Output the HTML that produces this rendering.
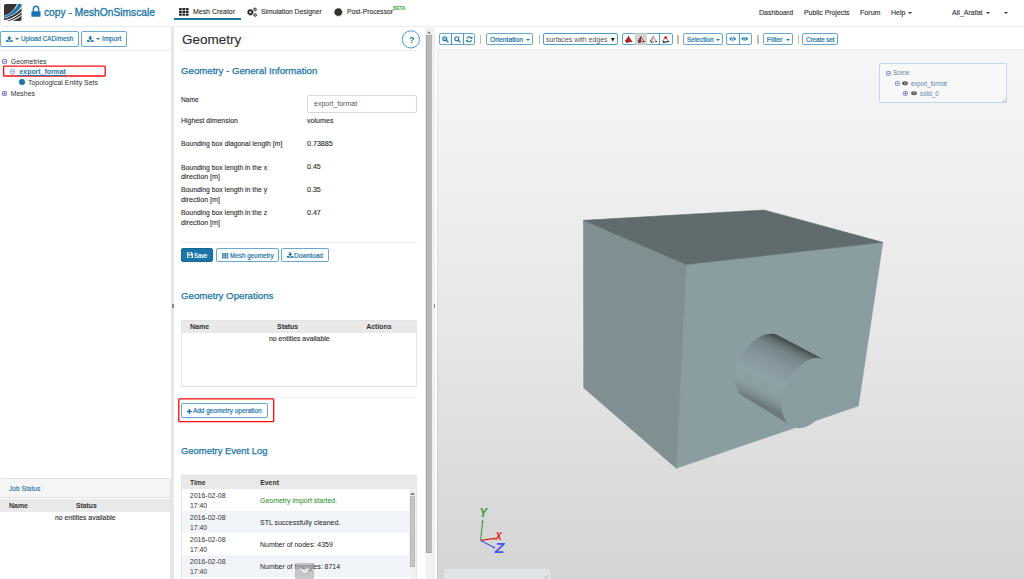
<!DOCTYPE html>
<html lang="en">
<head>
<meta charset="utf-8">
<title>copy - MeshOnSimscale</title>
<style>
*{box-sizing:border-box;margin:0;padding:0}
html,body{width:1024px;height:579px;overflow:hidden;background:#fff}
body{font-family:"Liberation Sans",sans-serif;color:#333;position:relative;font-size:7.5px}
.abs{position:absolute}
svg{overflow:visible}
.t{position:absolute;white-space:nowrap;transform-origin:0 50%;color:#2e2e2e;-webkit-text-stroke:.12px currentColor}
.t.a{-webkit-text-stroke:0;color:#333}
.blue{color:#1b75a8}
.btn{position:absolute;border:1px solid #66a8cf;border-radius:2px;background:#fff}
.sep{position:absolute;width:1.2px;height:9px;background:#d0b9a4;top:34.9px}
.hr{position:absolute;height:1px;background:#ebebeb}
.caret{position:absolute;width:0;height:0;border-left:2.2px solid transparent;border-right:2.2px solid transparent;border-top:2.5px solid #333}
.caret.b{border-top-color:#1b75a8}
</style>
</head>
<body>
<!-- ================= HEADER ================= -->
<div class="abs" style="left:0;top:-3px;width:1030px;height:29.8px;background:#fff;border:1px solid #ececec;border-radius:3px"></div>
<svg class="abs" style="left:4px;top:4px" width="18" height="17" viewBox="0 0 18 17">
  <rect x="0" y="0" width="17.5" height="17" rx="1.8" fill="#3a3436"/>
  <path d="M17.5 0 L13 0 C11 5 6 10 0 12 L0 14.6 C8 12.5 14.5 8 17.5 4 Z" fill="#fff"/>
  <path d="M17.5 0 L14 0 C12 5 6.5 10.3 0 12.6 L0 14 C8 12 14.8 7 17.5 2 Z" fill="#1a75b0"/>
  <path d="M0 16.2 C8 14.5 14 11 17.5 7.2 L17.5 8.2 C14 12 8 15.5 2 17 L0 17 Z" fill="#fff"/>
  <path d="M5 17 C10 15.8 15 13 17.5 10.6 L17.5 11.6 C15 14 11.5 16 8.5 17 Z" fill="#fff"/>
</svg>
<svg class="abs" style="left:30.5px;top:5px" width="10" height="12" viewBox="0 0 10 12">
  <path d="M2.4 6.4 V4.2 A2.6 2.9 0 0 1 7.6 4.2 V6.4" fill="none" stroke="#1a75b0" stroke-width="1.5"/>
  <rect x="0.4" y="6.2" width="9.2" height="5.6" rx="0.6" fill="#1a75b0"/>
</svg>
<div class="t" style="left:44px;top:4.70px;height:15px;line-height:15px;font-size:10.5px;transform:scaleX(0.9754);color:#1b75a8;-webkit-text-stroke:.32px #1b75a8">copy - MeshOnSimscale</div>

<!-- nav: mesh creator -->
<svg class="abs" style="left:179.4px;top:8px" width="10" height="8" viewBox="0 0 10 8">
  <g fill="#2b2526">
  <rect x="0" y="0" width="2.8" height="2.2" rx=".4"/><rect x="3.4" y="0" width="2.8" height="2.2" rx=".4"/><rect x="6.8" y="0" width="2.8" height="2.2" rx=".4"/>
  <rect x="0" y="2.8" width="2.8" height="2.2" rx=".4"/><rect x="3.4" y="2.8" width="2.8" height="2.2" rx=".4"/><rect x="6.8" y="2.8" width="2.8" height="2.2" rx=".4"/>
  <rect x="0" y="5.6" width="2.8" height="2.2" rx=".4"/><rect x="3.4" y="5.6" width="2.8" height="2.2" rx=".4"/><rect x="6.8" y="5.6" width="2.8" height="2.2" rx=".4"/>
  </g>
</svg>
<div class="t" style="left:193px;top:5.90px;height:11px;line-height:11px;font-size:8px;transform:scaleX(0.8665);">Mesh Creator</div>
<div class="abs" style="left:174px;top:18px;width:67px;height:2px;background:#1b75a8"></div>
<!-- nav: simulation designer (gears) -->
<svg class="abs" style="left:244px;top:4px" width="20" height="16" viewBox="244 4 20 16">
  <circle cx="250.35" cy="12.3" r="1.9" fill="none" stroke="#2b2526" stroke-width="1.6"/>
  <circle cx="250.35" cy="12.3" r="2.9" fill="none" stroke="#2b2526" stroke-width=".9" stroke-dasharray="1.14 1.14"/>
  <circle cx="255.05" cy="9.4" r="1.15" fill="none" stroke="#2b2526" stroke-width=".95"/>
  <circle cx="255.05" cy="9.4" r="1.75" fill="none" stroke="#2b2526" stroke-width=".5" stroke-dasharray=".7 .67"/>
  <circle cx="255.2" cy="15.05" r="1.15" fill="none" stroke="#2b2526" stroke-width=".95"/>
  <circle cx="255.2" cy="15.05" r="1.75" fill="none" stroke="#2b2526" stroke-width=".5" stroke-dasharray=".7 .67"/>
</svg>
<div class="t" style="left:261.2px;top:5.90px;height:11px;line-height:11px;font-size:8px;transform:scaleX(0.8492);">Simulation Designer</div>
<!-- nav: post-processor -->
<svg class="abs" style="left:328px;top:2px" width="24" height="20" viewBox="328 2 24 20">
  <circle cx="338.3" cy="12.2" r="3.6" fill="#332e2f"/>
  <circle cx="338.3" cy="12.2" r="3.7" fill="none" stroke="#332e2f" stroke-width="1" stroke-dasharray="1 .94"/>
</svg>
<div class="t" style="left:346.7px;top:5.90px;height:11px;line-height:11px;font-size:8px;transform:scaleX(0.8411);">Post-Processor</div>
<div class="t" style="left:393px;top:3.80px;height:8px;line-height:8px;font-size:5.3px;transform:scaleX(0.8909);font-weight:bold;color:#4aad4a">BETA</div>

<div class="t" style="left:759.4px;top:6.50px;height:11px;line-height:11px;font-size:7.5px;transform:scaleX(0.9291);">Dashboard</div>
<div class="t" style="left:804.3px;top:6.50px;height:11px;line-height:11px;font-size:7.5px;transform:scaleX(0.9172);">Public Projects</div>
<div class="t" style="left:860.4px;top:6.50px;height:11px;line-height:11px;font-size:7.5px;transform:scaleX(0.9459);">Forum</div>
<div class="t" style="left:891.4px;top:6.50px;height:11px;line-height:11px;font-size:7.5px;transform:scaleX(0.9328);">Help</div>
<div class="caret" style="left:908px;top:12px"></div>
<div class="t" style="left:952.4px;top:6.50px;height:11px;line-height:11px;font-size:7.5px;transform:scaleX(0.9406);">Ali_Arafat</div>
<div class="caret" style="left:985.6px;top:12px"></div>
<div class="caret" style="left:1003.6px;top:12px"></div>

<!-- ================= LEFT PANEL ================= -->
<div class="abs" style="left:171.3px;top:27px;width:2.8px;height:552px;background:#e7e7e7"></div>
<div class="btn" style="left:0;top:31px;width:79px;height:15.5px"></div>
<svg class="abs" style="left:5.8px;top:36px" width="7" height="6" viewBox="0 0 7 6">
  <path d="M3.3 0 L5.6 2.4 H4.2 V4 H2.4 V2.4 H1 Z" fill="#1b75a8"/>
  <path d="M0 3.9 H1.8 V4.6 H4.8 V3.9 H6.6 V5.8 H0 Z" fill="#1b75a8"/>
</svg>
<div class="caret b" style="left:15.2px;top:38.3px"></div>
<div class="t" style="left:21px;top:34.10px;height:10px;line-height:10px;font-size:7px;transform:scaleX(0.9005);color:#1b75a8;-webkit-text-stroke:.2px #1b75a8">Upload CAD/mesh</div>
<div class="btn" style="left:81.2px;top:31px;width:46px;height:15.5px"></div>
<svg class="abs" style="left:87px;top:36px" width="7" height="6" viewBox="0 0 7 6">
  <path d="M2.4 0 H4.2 V1.8 H5.6 L3.3 4.2 L1 1.8 H2.4 Z" fill="#1b75a8"/>
  <path d="M0 3.9 H1.6 L3.3 5 L5 3.9 H6.6 V5.8 H0 Z" fill="#1b75a8"/>
</svg>
<div class="caret b" style="left:96px;top:38.3px"></div>
<div class="t" style="left:101.8px;top:34.10px;height:10px;line-height:10px;font-size:7px;transform:scaleX(0.9776);color:#1b75a8;-webkit-text-stroke:.2px #1b75a8">Import</div>
<div class="hr" style="left:0;top:50px;width:172px;background:#ededed"></div>

<!-- tree -->
<svg class="abs" style="left:2px;top:59px" width="5" height="5" viewBox="0 0 5 5"><rect x=".5" y=".5" width="4" height="4" rx=".6" fill="#fff" stroke="#5a5ac8" stroke-width=".75"/><path d="M1.2 2.5H3.8" stroke="#5a5ac8" stroke-width=".75"/></svg>
<div class="t a" style="left:10.8px;top:56.50px;height:10px;line-height:10px;font-size:6.9px;">Geometries</div>
<svg class="abs" style="left:0;top:60px" width="110" height="20" viewBox="0 60 110 20"><rect x="3.6" y="66.1" width="101.6" height="9.9" rx=".8" fill="none" stroke="#fb0d0d" stroke-width="1.35"/></svg>
<svg class="abs" style="left:10.3px;top:68.6px" width="5" height="5.4" viewBox="0 0 5 5.4"><rect x=".5" y=".5" width="4" height="4.4" rx="1.2" fill="#fff" stroke="#8c8cd4" stroke-width=".9"/><path d="M1.2 2.7H3.8" stroke="#8c8cd4" stroke-width=".9"/></svg>
<div class="t a" style="left:17.6px;top:66.50px;height:10px;line-height:10px;font-size:6.9px;font-weight:bold;color:#1b75a8;text-decoration:underline">&nbsp;export_format</div>
<div class="abs" style="left:19.3px;top:79.2px;width:5.8px;height:5.8px;border-radius:50%;background:#1b75a8"></div>
<div class="t a" style="left:27.9px;top:77.60px;height:10px;line-height:10px;font-size:6.9px;transform:scaleX(1.0097);">Topological Entity Sets</div>
<svg class="abs" style="left:2px;top:91.2px" width="5" height="5" viewBox="0 0 5 5"><rect x=".5" y=".5" width="4" height="4" rx=".6" fill="#fff" stroke="#5a5ac8" stroke-width=".75"/><path d="M1.2 2.5H3.8M2.5 1.2V3.8" stroke="#5a5ac8" stroke-width=".75"/></svg>
<div class="t a" style="left:10.8px;top:88.80px;height:10px;line-height:10px;font-size:6.9px;">Meshes</div>

<!-- job status -->
<div class="abs" style="left:0;top:478px;width:171px;height:101px;border:1px solid #e2e2e2;border-left:0;border-bottom:0;border-radius:2px 2px 0 0;background:#fff"></div>
<div class="abs" style="left:0;top:479px;width:170px;height:19px;background:#f5f5f5;border-bottom:1px solid #e2e2e2"></div>
<div class="t" style="left:8.6px;top:482.50px;height:11px;line-height:11px;font-size:7.5px;transform:scaleX(0.8857);color:#1b75a8">Job Status</div>
<div class="abs" style="left:0;top:499px;width:170px;height:12.5px;background:#e9e9e9"></div>
<div class="t a" style="left:8.8px;top:501.10px;height:10px;line-height:10px;font-size:6.9px;transform:scaleX(1.0116);font-weight:bold">Name</div>
<div class="t a" style="left:75.8px;top:501.10px;height:10px;line-height:10px;font-size:6.9px;transform:scaleX(0.9875);font-weight:bold">Status</div>
<div class="t" style="left:55px;top:511.50px;height:11px;line-height:11px;font-size:7.5px;transform:scaleX(0.9197);">no entities available</div>

<!-- ================= CENTER PANEL ================= -->
<div class="t" style="left:181.6px;top:29.60px;height:19px;line-height:19px;font-size:13.7px;transform:scaleX(0.9868);color:#2b2b2b">Geometry</div>
<svg class="abs" style="left:400px;top:28px" width="22" height="22" viewBox="400 28 22 22"><circle cx="410.95" cy="39.4" r="8.6" fill="#fff" stroke="#4a9bc8" stroke-width="1"/></svg>
<div class="t" style="left:409.2px;top:33.50px;height:12px;line-height:12px;font-size:8.4px;font-weight:bold;color:#1b75a8;-webkit-text-stroke:0">?</div>
<div class="hr" style="left:181px;top:50px;width:236px"></div>
<div class="t" style="left:181px;top:63.70px;height:13px;line-height:13px;font-size:9.5px;transform:scaleX(1.0163);color:#1b75a8;-webkit-text-stroke:.25px #1b75a8">Geometry - General Information</div>

<div class="t" style="left:181.1px;top:94.10px;height:11px;line-height:11px;font-size:7.5px;transform:scaleX(0.8893);">Name</div>
<div class="abs" style="left:307px;top:95px;width:110px;height:18px;border:1px solid #d9d9d9;border-radius:2px;background:#fff"></div>
<div class="t a" style="left:314.2px;top:98.20px;height:11px;line-height:11px;font-size:7.5px;transform:scaleX(0.9313);color:#555">export_format</div>
<div class="t" style="left:181.1px;top:115.10px;height:11px;line-height:11px;font-size:7.5px;transform:scaleX(0.9222);">Highest dimension</div>
<div class="t" style="left:307px;top:114.60px;height:11px;line-height:11px;font-size:7.5px;transform:scaleX(0.9485);">volumes</div>
<div class="t" style="left:181.1px;top:138.00px;height:11px;line-height:11px;font-size:7.5px;transform:scaleX(0.9098);">Bounding box diagonal length [m]</div>
<div class="t" style="left:307px;top:137.50px;height:11px;line-height:11px;font-size:7.5px;transform:scaleX(0.9475);">0.73885</div>
<div class="t" style="left:181.1px;top:161.50px;height:11px;line-height:11px;font-size:7.5px;transform:scaleX(0.9096);">Bounding box length in the x</div>
<div class="t" style="left:181.1px;top:170.70px;height:11px;line-height:11px;font-size:7.5px;transform:scaleX(0.9569);">direction [m]</div>
<div class="t" style="left:307px;top:160.70px;height:11px;line-height:11px;font-size:7.5px;transform:scaleX(0.9446);">0.45</div>
<div class="t" style="left:181.1px;top:184.30px;height:11px;line-height:11px;font-size:7.5px;transform:scaleX(0.9096);">Bounding box length in the y</div>
<div class="t" style="left:181.1px;top:193.60px;height:11px;line-height:11px;font-size:7.5px;transform:scaleX(0.9569);">direction [m]</div>
<div class="t" style="left:307px;top:183.60px;height:11px;line-height:11px;font-size:7.5px;transform:scaleX(0.9446);">0.35</div>
<div class="t" style="left:181.1px;top:207.20px;height:11px;line-height:11px;font-size:7.5px;transform:scaleX(0.9096);">Bounding box length in the z</div>
<div class="t" style="left:181.1px;top:216.80px;height:11px;line-height:11px;font-size:7.5px;transform:scaleX(0.9569);">direction [m]</div>
<div class="t" style="left:307px;top:206.70px;height:11px;line-height:11px;font-size:7.5px;transform:scaleX(0.9446);">0.47</div>
<div class="hr" style="left:181px;top:241.5px;width:236px"></div>

<div class="btn" style="left:181px;top:248px;width:32.4px;height:14.2px;background:#1b75a8;border-color:#166592"></div>
<svg class="abs" style="left:186.9px;top:252.4px" width="6" height="6" viewBox="0 0 5.4 5.6"><path d="M0 0H4L5.4 1.4V5.6H0Z" fill="#fff"/><rect x="1" y=".5" width="2.6" height="1.6" fill="#1b75a8"/><rect x="1" y="3.2" width="3.4" height="2" fill="#1b75a8"/></svg>
<div class="t" style="left:194px;top:250.10px;height:11px;line-height:11px;font-size:7.5px;transform:scaleX(0.7774);color:#fff;-webkit-text-stroke:.2px #fff">Save</div>
<div class="btn" style="left:216px;top:248px;width:63.2px;height:14.2px"></div>
<svg class="abs" style="left:221.8px;top:252.5px" width="6.2" height="5.6" viewBox="0 0 6.2 5.6"><g fill="#1b75a8"><rect x="0" y="0" width="1.7" height="5.6" rx=".3"/><rect x="2.25" y="0" width="1.7" height="5.6" rx=".3"/><rect x="4.5" y="0" width="1.7" height="5.6" rx=".3"/></g><path d="M0 1.9H6.2M0 3.7H6.2" stroke="#fff" stroke-width=".35"/></svg>
<div class="t" style="left:229.9px;top:250.60px;height:10px;line-height:10px;font-size:7px;transform:scaleX(0.9036);color:#1b75a8;-webkit-text-stroke:.2px #1b75a8">Mesh geometry</div>
<div class="btn" style="left:281.4px;top:248px;width:47.6px;height:14.2px"></div>
<svg class="abs" style="left:286.9px;top:252.3px" width="6.4" height="6" viewBox="0 0 6.6 5.8">
  <path d="M2.4 0 H4.2 V1.8 H5.6 L3.3 4.2 L1 1.8 H2.4 Z" fill="#1b75a8"/>
  <path d="M0 3.9 H1.6 L3.3 5 L5 3.9 H6.6 V5.8 H0 Z" fill="#1b75a8"/>
</svg>
<div class="t" style="left:294.4px;top:250.60px;height:10px;line-height:10px;font-size:7px;transform:scaleX(0.9280);color:#1b75a8;-webkit-text-stroke:.2px #1b75a8">Download</div>

<div class="t" style="left:181.2px;top:288.50px;height:13px;line-height:13px;font-size:9.5px;transform:scaleX(1.0173);color:#1b75a8;-webkit-text-stroke:.25px #1b75a8">Geometry Operations</div>
<div class="abs" style="left:181px;top:320px;width:236px;height:66.6px;border:1px solid #e3e3e3;background:#fff"></div>
<div class="abs" style="left:181.5px;top:320.5px;width:235px;height:12.4px;background:#e9e9e9"></div>
<div class="t a" style="left:189.7px;top:322.10px;height:10px;line-height:10px;font-size:6.9px;transform:scaleX(1.0170);font-weight:bold">Name</div>
<div class="t a" style="left:277.4px;top:322.10px;height:10px;line-height:10px;font-size:6.9px;transform:scaleX(1.0065);font-weight:bold">Status</div>
<div class="t a" style="left:366.3px;top:322.10px;height:10px;line-height:10px;font-size:6.9px;font-weight:bold">Actions</div>
<div class="t" style="left:268.6px;top:332.50px;height:11px;line-height:11px;font-size:7.5px;transform:scaleX(0.9197);">no entities available</div>
<div class="hr" style="left:181px;top:396.8px;width:236px;background:#f0f0f0"></div>
<svg class="abs" style="left:174px;top:395px" width="110" height="30" viewBox="174 395 110 30"><rect x="178.8" y="398.9" width="94.9" height="22.8" rx=".8" fill="none" stroke="#fb0d0d" stroke-width="1.35"/></svg>
<div class="btn" style="left:181.2px;top:403.3px;width:86.8px;height:14.6px"></div>
<svg class="abs" style="left:187.1px;top:408.5px" width="4.8" height="4.8" viewBox="0 0 4.8 4.8"><path d="M2.4 0V4.8M0 2.4H4.8" stroke="#1b75a8" stroke-width="1.5"/></svg>
<div class="t" style="left:193.3px;top:405.90px;height:10px;line-height:10px;font-size:7px;transform:scaleX(0.9181);color:#1b75a8;-webkit-text-stroke:.2px #1b75a8">Add geometry operation</div>

<div class="t" style="left:181.2px;top:444.10px;height:13px;line-height:13px;font-size:9.5px;transform:scaleX(0.9926);color:#1b75a8;-webkit-text-stroke:.25px #1b75a8">Geometry Event Log</div>
<div class="abs" style="left:181px;top:475px;width:236px;height:104px;border:1px solid #e3e3e3;border-bottom:0;background:#fff"></div>
<div class="abs" style="left:181.5px;top:475.5px;width:235px;height:13.8px;background:#e9e9e9"></div>
<div class="t a" style="left:189.8px;top:477.80px;height:10px;line-height:10px;font-size:6.9px;transform:scaleX(0.9706);font-weight:bold">Time</div>
<div class="t a" style="left:260.2px;top:477.80px;height:10px;line-height:10px;font-size:6.9px;font-weight:bold">Event</div>
<div class="abs" style="left:181.5px;top:511.2px;width:227px;height:22px;background:#f1f5fa"></div>
<div class="abs" style="left:181.5px;top:555.2px;width:227px;height:22px;background:#f1f5fa"></div>
<div class="t a" style="left:189.8px;top:490.50px;height:10px;line-height:10px;font-size:7px;">2016-02-08</div>
<div class="t a" style="left:189.8px;top:500.50px;height:10px;line-height:10px;font-size:7px;transform:scaleX(0.9811);">17:40</div>
<div class="t a" style="left:260.2px;top:495.50px;height:10px;line-height:10px;font-size:7px;transform:scaleX(0.9958);color:#168c16">Geometry import started.</div>
<div class="t a" style="left:189.8px;top:512.50px;height:10px;line-height:10px;font-size:7px;">2016-02-08</div>
<div class="t a" style="left:189.8px;top:522.50px;height:10px;line-height:10px;font-size:7px;transform:scaleX(0.9811);">17:40</div>
<div class="t a" style="left:260.2px;top:517.50px;height:10px;line-height:10px;font-size:7px;transform:scaleX(0.9954);color:#1a1a1a">STL successfully cleaned.</div>
<div class="t a" style="left:189.8px;top:534.50px;height:10px;line-height:10px;font-size:7px;">2016-02-08</div>
<div class="t a" style="left:189.8px;top:544.50px;height:10px;line-height:10px;font-size:7px;transform:scaleX(0.9811);">17:40</div>
<div class="t a" style="left:260.2px;top:539.50px;height:10px;line-height:10px;font-size:7px;transform:scaleX(0.9949);color:#1a1a1a">Number of nodes: 4359</div>
<div class="t a" style="left:189.8px;top:556.50px;height:10px;line-height:10px;font-size:7px;">2016-02-08</div>
<div class="t a" style="left:189.8px;top:566.50px;height:10px;line-height:10px;font-size:7px;transform:scaleX(0.9811);">17:40</div>
<div class="t a" style="left:260.2px;top:561.50px;height:10px;line-height:10px;font-size:7px;transform:scaleX(0.9932);color:#1a1a1a">Number of triangles: 8714</div>
<!-- inner scrollbar -->
<div class="abs" style="left:408.6px;top:489.4px;width:7.6px;height:90px;background:#f1f1f1"></div>
<div class="abs" style="left:409.6px;top:496.4px;width:5.8px;height:70.8px;background:#c6c6c6;border:1px solid #b8b8b8"></div>
<svg class="abs" style="left:410px;top:491.5px" width="5" height="3" viewBox="0 0 5 3"><path d="M0 3L2.5 .3L5 3Z" fill="#777"/></svg>
<!-- down chevron tab -->
<div class="abs" style="left:295.2px;top:563px;width:18.6px;height:16px;background:rgba(165,165,165,.6)"></div>
<svg class="abs" style="left:300px;top:567.5px" width="9" height="5" viewBox="0 0 9 5"><path d="M.5 .5L4.5 4.2L8.5 .5" fill="none" stroke="#fff" stroke-width="1.2"/></svg>

<!-- center scrollbar -->
<div class="abs" style="left:425.4px;top:28px;width:9.6px;height:551px;background:#f1f1f1"></div>
<div class="abs" style="left:426px;top:35px;width:6.2px;height:518px;background:#b9b9b9;border-left:1px solid #a2a2a2;border-top:1px solid #a8a8a8;border-bottom:1px solid #a8a8a8"></div>
<svg class="abs" style="left:427px;top:30.8px" width="4" height="2.6" viewBox="0 0 4 2.6"><path d="M0 2.6L2 .2L4 2.6Z" fill="#7d7d7d"/></svg>
<div class="abs" style="left:433.5px;top:304px;width:1.4px;height:4px;background:#8a8a8a"></div>
<div class="abs" style="left:172.4px;top:304px;width:1.4px;height:4px;background:#8a8a8a"></div>

<!-- ================= VIEWER ================= -->
<div class="abs" style="left:437px;top:49px;width:587px;height:531px;border-top:1px solid rgba(0,0,0,.05);border-left:1.6px solid rgba(0,0,0,.06);border-radius:2px 0 0 0;background-origin:border-box;background-image:linear-gradient(180deg,#f6f6f6 0%,#efefef 25%,#e6e6e6 55%,#dadada 85%,#d5d5d5 100%)"></div>

<!-- toolbar -->
<div class="btn" style="left:439px;top:33.2px;width:35.8px;height:11.9px"></div>
<div class="abs" style="left:451.3px;top:33.2px;width:1px;height:11.9px;background:#4a9cc9"></div>
<div class="abs" style="left:462.8px;top:33.2px;width:1px;height:11.9px;background:#4a9cc9"></div>
<svg class="abs" style="left:442.4px;top:35.8px" width="7" height="7" viewBox="0 0 7 7"><circle cx="2.8" cy="2.8" r="2" fill="none" stroke="#1b75a8" stroke-width="1.1"/><path d="M4.3 4.3L6.4 6.4" stroke="#1b75a8" stroke-width="1.3"/><path d="M1.8 2.8H3.8M2.8 1.8V3.8" stroke="#1b75a8" stroke-width=".6"/></svg>
<svg class="abs" style="left:453.9px;top:35.8px" width="7" height="7" viewBox="0 0 7 7"><circle cx="2.8" cy="2.8" r="2" fill="none" stroke="#1b75a8" stroke-width="1.1"/><path d="M4.3 4.3L6.4 6.4" stroke="#1b75a8" stroke-width="1.3"/></svg>
<svg class="abs" style="left:465.6px;top:35.9px" width="6.6" height="6.6" viewBox="0 0 6.6 6.6"><path d="M5.6 2.4A2.5 2.5 0 0 0 1 2.4M1 4.2A2.5 2.5 0 0 0 5.6 4.2" fill="none" stroke="#1b75a8" stroke-width="1.1"/><path d="M6.4 .4V2.8H4Z M.2 6.2V3.8H2.6Z" fill="#1b75a8"/></svg>
<div class="sep" style="left:480.2px"></div>
<div class="btn" style="left:486.2px;top:33.2px;width:46.6px;height:11.9px"></div>
<div class="t" style="left:489.7px;top:34.60px;height:10px;line-height:10px;font-size:7px;transform:scaleX(0.9664);color:#1b75a8;-webkit-text-stroke:.2px #1b75a8">Orientation</div>
<div class="caret b" style="left:525.6px;top:38.6px"></div>
<div class="sep" style="left:538.6px"></div>
<div class="btn" style="left:543px;top:33.1px;width:74.8px;height:11.9px;border-color:#4a9cc9"></div>
<div class="t a" style="left:546px;top:34.30px;height:11px;line-height:11px;font-size:7.5px;transform:scaleX(0.9276);color:#555">surfaces with edges</div>
<svg class="abs" style="left:611px;top:37.6px" width="3.6" height="3.4" viewBox="0 0 3.6 3.4"><path d="M0 0H3.6L1.8 3.4Z" fill="#111"/></svg>
<div class="btn" style="left:622.2px;top:33.1px;width:50.6px;height:11.9px"></div>
<div class="abs" style="left:635px;top:33.1px;width:12.4px;height:11.9px;background:#d3d3d3;border-top:1px solid #c4c4c4;border-bottom:1px solid #c4c4c4"></div>
<div class="abs" style="left:659.2px;top:33.1px;width:1px;height:11.9px;background:#4a9cc9"></div>
<svg class="abs" style="left:620px;top:30px" width="56" height="18" viewBox="620 30 56 18">
  <g stroke-linejoin="round">
  <path d="M628.5 36.6L631.8 41.5L626.8 42.3L625.7 40.7Z" fill="#f00808" stroke="#3a1a1a" stroke-width=".55"/>
  <circle cx="628.5" cy="36.7" r=".55" fill="#111"/><circle cx="631.7" cy="41.5" r=".6" fill="#111"/><circle cx="626.8" cy="42.2" r=".6" fill="#111"/><circle cx="625.8" cy="40.7" r=".55" fill="#111"/>
  <path d="M640.8 36.6L644 41.5L639.1 42.3L638.3 40.7Z" fill="#e8e8e8" stroke="#222" stroke-width=".6"/>
  <path d="M640.8 36.9L641.6 41.7L639.3 42L639.6 39.4Z" fill="#f00808"/>
  <path d="M640.8 36.6L639.1 42.3" stroke="#222" stroke-width=".6"/>
  <circle cx="644" cy="41.5" r=".6" fill="#111"/><circle cx="639.1" cy="42.2" r=".6" fill="#111"/><circle cx="638.4" cy="40.7" r=".55" fill="#111"/>
  <path d="M653.2 36.6L656.4 41.5L651.4 42.3L650.3 40.7Z" fill="#fff" stroke="#333" stroke-width=".55"/>
  <path d="M653.2 36.8L651.6 42" stroke="#f04040" stroke-width=".7"/>
  <circle cx="656.4" cy="41.5" r=".6" fill="#111"/><circle cx="651.4" cy="42.2" r=".6" fill="#111"/><circle cx="650.4" cy="40.7" r=".55" fill="#111"/>
  <path d="M665.7 37.4L668.7 41.5L663.7 42.3L662.9 40.7Z" fill="#fff" stroke="#333" stroke-width=".6"/>
  <path d="M668.7 41.5L663.7 42.3L662.9 40.7" fill="none" stroke="#222" stroke-width=".9"/>
  <circle cx="665.7" cy="37.6" r="1.35" fill="#f00808"/>
  <circle cx="668.7" cy="41.5" r=".6" fill="#111"/><circle cx="663.7" cy="42.2" r=".6" fill="#111"/>
  </g>
</svg>
<div class="sep" style="left:677.4px"></div>
<div class="btn" style="left:683.3px;top:33.2px;width:39.8px;height:11.9px"></div>
<div class="t" style="left:686.8px;top:34.60px;height:10px;line-height:10px;font-size:7px;transform:scaleX(0.9237);color:#1b75a8;-webkit-text-stroke:.2px #1b75a8">Selection</div>
<div class="caret b" style="left:716.2px;top:38.6px"></div>
<div class="btn" style="left:726.2px;top:33.2px;width:25.4px;height:11.9px"></div>
<div class="abs" style="left:738.6px;top:33.2px;width:1px;height:11.9px;background:#4a9cc9"></div>
<svg class="abs" style="left:729px;top:36.2px" width="7.4" height="5.6" viewBox="0 0 7.4 5.6"><path d="M.2 2.8C1.6 .4 5.8 .4 7.2 2.8C5.8 5.2 1.6 5.2 .2 2.8Z" fill="#1b75a8"/><circle cx="3.7" cy="2.8" r="1.5" fill="#fff"/><circle cx="3.7" cy="2.8" r=".9" fill="#1b75a8"/><path d="M5.6 -.2L2.2 5.8" stroke="#fff" stroke-width="1.3"/><path d="M5.3 .1L2.5 5.5" stroke="#1b75a8" stroke-width=".7"/></svg>
<svg class="abs" style="left:741.4px;top:36.2px" width="7.4" height="5.6" viewBox="0 0 7.4 5.6"><path d="M.2 2.8C1.6 .4 5.8 .4 7.2 2.8C5.8 5.2 1.6 5.2 .2 2.8Z" fill="#1b75a8"/><circle cx="3.7" cy="2.8" r="1.5" fill="#fff"/><circle cx="3.7" cy="2.8" r=".9" fill="#1b75a8"/></svg>
<div class="sep" style="left:757.4px"></div>
<div class="btn" style="left:763.4px;top:33.2px;width:29.4px;height:11.9px"></div>
<div class="t" style="left:766.8px;top:34.60px;height:10px;line-height:10px;font-size:7px;color:#1b75a8;-webkit-text-stroke:.2px #1b75a8">Filter</div>
<div class="caret b" style="left:785.6px;top:38.6px"></div>
<div class="sep" style="left:798px"></div>
<div class="btn" style="left:802.2px;top:33.2px;width:35.4px;height:11.9px"></div>
<div class="t" style="left:805.6px;top:34.60px;height:10px;line-height:10px;font-size:7px;transform:scaleX(0.8855);color:#1b75a8;-webkit-text-stroke:.2px #1b75a8">Create set</div>

<!-- scene tree box -->
<div class="abs" style="left:879.2px;top:62.8px;width:128.2px;height:39.8px;border:1px solid #b9dcec;border-radius:2px;background:rgba(255,255,255,.35)"></div>
<svg class="abs" style="left:886.4px;top:70.6px" width="4.8" height="4.8" viewBox="0 0 5 5"><rect x=".5" y=".5" width="4" height="4" rx=".8" fill="#fff" stroke="#5a6fc4" stroke-width=".8"/><path d="M1.2 2.5H3.8" stroke="#5a6fc4" stroke-width=".9"/></svg>
<div class="t a" style="left:892.8px;top:68.00px;height:9px;line-height:9px;font-size:6.5px;transform:scaleX(0.8786);color:#5c81a8">Scene</div>
<svg class="abs" style="left:895px;top:81px" width="4.8" height="4.8" viewBox="0 0 5 5"><rect x=".5" y=".5" width="4" height="4" rx=".8" fill="#fff" stroke="#5a6fc4" stroke-width=".8"/><path d="M1.2 2.5H3.8" stroke="#5a6fc4" stroke-width=".9"/></svg>
<svg class="abs" style="left:902.2px;top:81.2px" width="6" height="4.4" viewBox="0 0 6 4.4"><ellipse cx="3" cy="2.2" rx="2.9" ry="2" fill="#5b5455"/><circle cx="3" cy="2.2" r=".8" fill="#ddd"/></svg>
<div class="t a" style="left:911px;top:79.20px;height:9px;line-height:9px;font-size:6.5px;transform:scaleX(0.8975);color:#5c81a8">export_format</div>
<svg class="abs" style="left:903.4px;top:91px" width="4.8" height="4.8" viewBox="0 0 5 5"><rect x=".5" y=".5" width="4" height="4" rx=".8" fill="#fff" stroke="#5a6fc4" stroke-width=".8"/><path d="M1.2 2.5H3.8M2.5 1.2V3.8" stroke="#5a6fc4" stroke-width=".9"/></svg>
<svg class="abs" style="left:911px;top:91.4px" width="6" height="4.4" viewBox="0 0 6 4.4"><ellipse cx="3" cy="2.2" rx="2.9" ry="2" fill="#5b5455"/><circle cx="3" cy="2.2" r=".8" fill="#ddd"/></svg>
<div class="t a" style="left:919.6px;top:89.30px;height:9px;line-height:9px;font-size:6.5px;transform:scaleX(0.8928);color:#5c81a8">solid_0</div>
<svg class="abs" style="left:1002px;top:97.6px" width="4.4" height="4.4" viewBox="0 0 4.4 4.4"><path d="M4.2 .4L.4 4.2M4.2 2.4L2.4 4.2" stroke="#888" stroke-width=".5"/></svg>

<!-- 3D model -->
<svg class="abs" style="left:437px;top:50px" width="587" height="529" viewBox="437 50 587 529">
  <defs>
    <linearGradient id="cyl" gradientUnits="userSpaceOnUse" x1="796" y1="346.5" x2="767.2" y2="406.7">
      <stop offset="0" stop-color="#465052"/>
      <stop offset=".05" stop-color="#5f6b6e"/>
      <stop offset=".16" stop-color="#76868a"/>
      <stop offset=".35" stop-color="#83959a"/>
      <stop offset=".62" stop-color="#8fa2a6"/>
      <stop offset=".82" stop-color="#8a9da1"/>
      <stop offset=".94" stop-color="#7b8b8f"/>
      <stop offset="1" stop-color="#6c7a7d"/>
    </linearGradient>
  </defs>
  <!-- silhouette halo -->
  <path d="M583.5,387.8 L583.4,220.3 L764,209.9 L882.9,242.3" fill="none" stroke="rgba(255,255,255,.75)" stroke-width="1.6" stroke-linejoin="round"/>
  <!-- right face -->
  <polygon points="686.4,264.5 882.9,242.3 858.4,406 676.3,468.3" fill="#8a9da0" stroke="#8a9da0" stroke-width=".5" stroke-linejoin="round"/>
  <!-- left face -->
  <polygon points="583.4,220.3 686.4,264.5 676.3,468.3 583.6,387.8" fill="#7f8f92" stroke="#7f8f92" stroke-width=".6" stroke-linejoin="round"/>
  <!-- top face -->
  <polygon points="583.4,220.3 764,209.9 882.9,242.3 686.4,264.5" fill="#5f6b6d" stroke="#5f6b6d" stroke-width=".6" stroke-linejoin="round"/>
  <!-- cylinder side -->
  <path d="M742.8,396.0 L741.5,395.1 L740.4,394.1 L739.4,392.9 L738.4,391.6 L737.6,390.1 L736.9,388.6 L736.3,386.9 L735.8,385.1 L735.5,383.3 L735.3,381.3 L735.2,379.3 L735.2,377.2 L735.4,375.1 L735.6,372.9 L736.0,370.6 L736.6,368.4 L737.2,366.1 L738.0,363.9 L738.8,361.6 L739.8,359.4 L740.9,357.2 L742.1,355.1 L743.3,353.0 L744.7,350.9 L746.1,349.0 L747.7,347.1 L749.2,345.3 L750.9,343.6 L752.5,342.1 L754.3,340.6 L756.0,339.3 L757.8,338.1 L759.6,337.0 L761.4,336.1 L763.2,335.3 L765.0,334.7 L766.8,334.2 L768.5,333.9 L770.2,333.7 L771.9,333.7 L773.5,333.8 L775.0,334.1 L776.5,334.6 L777.9,335.2 L824.4,359.8 L808.0,393.0 L790.3,425.3Z" fill="url(#cyl)"/>
  <!-- cylinder cap -->
  <path d="M828.8,402.7 L827.7,405.0 L826.5,407.3 L825.1,409.5 L823.7,411.6 L822.2,413.6 L820.7,415.5 L819.1,417.3 L817.4,419.0 L815.7,420.6 L813.9,422.0 L812.1,423.3 L810.3,424.4 L808.5,425.4 L806.7,426.2 L804.9,426.9 L803.1,427.4 L801.3,427.7 L799.6,427.9 L797.9,427.9 L796.2,427.7 L794.6,427.4 L793.1,426.9 L791.6,426.2 L790.3,425.3 L789.0,424.3 L787.8,423.2 L786.7,421.9 L785.7,420.5 L784.8,418.9 L784.0,417.2 L783.4,415.4 L782.8,413.4 L782.4,411.4 L782.1,409.3 L782.0,407.1 L781.9,404.8 L782.0,402.5 L782.3,400.2 L782.6,397.8 L783.1,395.3 L783.7,392.9 L784.4,390.5 L785.2,388.0 L786.1,385.6 L787.2,383.3 L788.3,381.0 L789.5,378.7 L790.9,376.5 L792.3,374.4 L793.8,372.4 L795.3,370.5 L796.9,368.7 L798.6,367.0 L800.3,365.4 L802.1,364.0 L803.9,362.7 L805.7,361.6 L807.5,360.6 L809.3,359.8 L811.1,359.1 L812.9,358.6 L814.7,358.3 L816.4,358.1 L818.1,358.1 L819.8,358.3 L821.4,358.6 L822.9,359.1 L824.4,359.8 L825.7,360.7 L827.0,361.7 L828.2,362.8 L829.3,364.1 L830.3,365.5 L831.2,367.1 L832.0,368.8 L832.6,370.6 L833.2,372.6 L833.6,374.6 L833.9,376.7 L834.0,378.9 L834.1,381.2 L834.0,383.5 L833.7,385.8 L833.4,388.2 L832.9,390.7 L832.3,393.1 L831.6,395.5 L830.8,398.0 L829.9,400.4Z" fill="#8a9da0" stroke="#8a9da0" stroke-width=".4"/>
  <!-- axes -->
  <g stroke-width="1.1" fill="none">
    <path d="M480.7,540.4 L482.6,521" stroke="#3f9b3f"/>
    <path d="M480.7,540.4 L494.6,538.4" stroke="#d92020"/>
    <path d="M480.7,540.4 L494,547.6" stroke="#4a55f0"/>
  </g>
  <circle cx="494.4" cy="538.4" r="1" fill="#d92020"/>
  <circle cx="494" cy="547.6" r="1" fill="#4a55f0"/>
  <path d="M481.4,522.6 L482.7,519.6 L483.8,522.8Z" fill="#3f9b3f"/>
  <text x="479.4" y="517.4" font-family="Liberation Sans, sans-serif" font-size="12.5" font-weight="bold" font-style="italic" fill="#3a9a3a" textLength="7.6" lengthAdjust="spacingAndGlyphs">Y</text>
  <text x="495.4" y="540" font-family="Liberation Sans, sans-serif" font-size="11" font-weight="bold" font-style="italic" fill="#e01818" textLength="6.2" lengthAdjust="spacingAndGlyphs">X</text>
  <text x="494.8" y="552.7" font-family="Liberation Sans, sans-serif" font-size="14" font-weight="bold" font-style="italic" fill="#4a55f0" textLength="9.6" lengthAdjust="spacingAndGlyphs">Z</text>
</svg>
<!-- bottom box -->
<div class="abs" style="left:443.6px;top:569.2px;width:106px;height:12px;border:1px solid #d9e7ef;border-radius:2px;background:rgba(255,255,255,.35)"></div>
<svg class="abs" style="left:544px;top:574.4px" width="4.4" height="4.4" viewBox="0 0 4.4 4.4"><path d="M4.2 .4L.4 4.2M4.2 2.4L2.4 4.2" stroke="#888" stroke-width=".5"/></svg>

</body>
</html>
